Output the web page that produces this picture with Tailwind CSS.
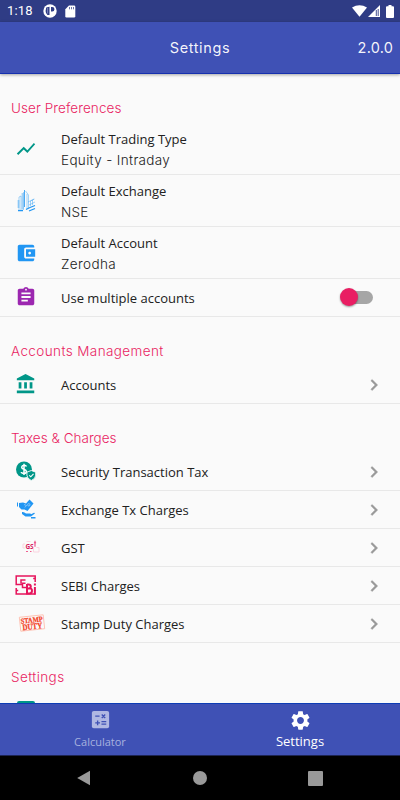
<!DOCTYPE html>
<html lang="en">
<head>
<meta charset="utf-8">
<title>Settings</title>
<script src="https://cdn.jsdelivr.net/npm/@tailwindcss/browser@4"></script>
</head>
<body class="w-[400px] h-[800px] overflow-hidden bg-[#fafafa] text-[#212121] font-['Open_Sans',sans-serif] text-[13px] whitespace-nowrap">
<div class="flex flex-col h-[800px]">
  <div class="flex items-center h-[22px] shrink-0 bg-[#2f3c85] text-white pl-[7px] pr-[6px]">
    <span class="font-[Roboto] text-[13px] tracking-[0.2px] w-[36px]">1:18</span>
    <svg class="w-[14px] h-[14px]" viewBox="0 0 14 14"><circle cx="7" cy="7" r="6.7" fill="#fff"/><path d="M3.200 3.500L6.500 2.800v8.200H4.500A5 5 0 0 1 2.600 7zM8 3h1.200a2 2 0 0 1 0 4.500H8z" fill="#2f3c85"/><path d="M4.600 4v5.500" stroke="#8e96c4" stroke-width=".8"/></svg>
    <svg class="ml-[8px] w-[11px] h-[13px]" viewBox="0 0 11 13"><path d="M4 .5h5q1.300 0 1.300 1.200v9.500q0 1.300-1.300 1.300H1.500Q.3 12.500.3 11.200V4.200z" fill="#fff"/><path d="M4.500 2v2.300M6.500 2v2.300M8.500 2v2.300" stroke="#2f3c85" stroke-opacity=".7"/></svg>
    <svg class="ml-auto w-[15px] h-[12px]" viewBox="0 0 15 12"><path d="M0 2.600Q7.500-1.900 15 2.600L7.500 11.800z" fill="#fff"/></svg>
    <svg class="ml-px w-[12px] h-[12px]" viewBox="0 0 12 12"><path d="M0 12L12 0v12z" fill="#fff"/><path d="M8.300 5v6M10.200 4v7" stroke="#2f3c85" stroke-width=".9"/></svg>
    <svg class="ml-[6px] w-[8px] h-[13px]" viewBox="0 0 8 13"><path d="M2.500 0h3v1.200H7q1 0 1 1V12q0 1-1 1H1q-1 0-1-1V2.200q0-1 1-1h1.500z" fill="#fff"/></svg>
  </div>
  <header class="relative z-10 grid grid-cols-3 items-center h-[52px] shrink-0 bg-[#3f51b5] border-b border-[#1530ae] shadow-[0_1px_3px_rgba(0,0,0,0.35)] text-white/95 font-[Inter] text-[14.500px] pr-[7px] pl-[7px]">
    <span></span>
    <h1 class="text-center tracking-[0.600px]">Settings</h1>
    <span class="text-right tracking-[0.200px]">2.0.0</span>
  </header>

  <main class="flex-1 overflow-hidden bg-[#fafafa] leading-[20px]">
    <h2 class="h-[49px] pt-[19px] pl-[11px] leading-[30px] text-[#e91e63] font-[Inter] font-light text-[13.500px] tracking-[0.080px]">User Preferences</h2>
    <div class="flex items-center h-[52px] border-b border-[#e8e8e8]">
      <div class="w-[61px] pl-[15px]"><svg class="size-[22px]" viewBox="0 0 24 24"><path fill="#009688" d="M3.500 18.490l6-6.010 4 4L22 6.920l-1.410-1.410-7.090 7.970-4-4L2 16.990z"/></svg></div>
      <div class="pt-[2px]"><p class="-mt-px">Default Trading Type</p><p class="mt-px font-[Inter] font-light tracking-[0.340px] text-[13.500px]">Equity - Intraday</p></div>
    </div>
    <div class="flex items-center h-[52px] border-b border-[#e8e8e8]">
      <div class="w-[61px] pl-[17px]"><svg class="w-[19px] h-[23px]" viewBox="0 0 19 23" fill="none" stroke="#2196f3"><path stroke-opacity=".4" d="M2 20V8l2-1v13M6.500 21V3M8.500 2l3 4v13M10 5v15M13.500 17v-5l4-2M15.500 11v5M11 13l6-3M12 16l6-3"/><path stroke-width="1.800" stroke-opacity=".4" d="M5.500 4v16M1.500 11v8"/><path d="M7.500 1v17" stroke-opacity=".8"/><path stroke-width="1.300" d="M9 20.500l4-2 5-2M12 22l6-2.500M1 21.500h5"/></svg></div>
      <div class="pt-[2px]"><p class="-mt-px">Default Exchange</p><p class="mt-px font-[Inter] font-light tracking-[0.200px] text-[13.500px]">NSE</p></div>
    </div>
    <div class="flex items-center h-[52px] border-b border-[#e8e8e8]">
      <div class="w-[61px] pl-[15px]"><svg class="size-[22px]" viewBox="0 0 24 24"><path fill="#2196f3" d="M21 18v1c0 1.100-.900 2-2 2H5c-1.110 0-2-.900-2-2V5c0-1.100.890-2 2-2h14c1.100 0 2 .900 2 2v1h-9c-1.110 0-2 .900-2 2v8c0 1.100.890 2 2 2h9zm-9-2h10V8H12v8zm4-2.500c-.830 0-1.500-.670-1.500-1.500s.670-1.500 1.500-1.500 1.500.670 1.500 1.500-.670 1.500-1.500 1.500z"/></svg></div>
      <div class="pt-[2px]"><p class="-mt-px">Default Account</p><p class="mt-px font-[Inter] font-light tracking-[0.400px] text-[13.500px]">Zerodha</p></div>
    </div>
    <div class="flex items-center h-[38px] border-b border-[#e8e8e8]">
      <div class="w-[61px] pl-[15px] pb-[2px]"><svg class="size-[22px]" viewBox="0 0 24 24"><path fill="#9c27b0" d="M19 3h-4.180C14.400 1.840 13.300 1 12 1c-1.300 0-2.400.840-2.820 2H5c-1.100 0-2 .900-2 2v14c0 1.100.900 2 2 2h14c1.100 0 2-.900 2-2V5c0-1.100-.900-2-2-2zm-7 0c.550 0 1 .450 1 1s-.450 1-1 1-1-.450-1-1 .450-1 1-1zm2 14H7v-2h7v2zm3-4H7v-2h10v2zm0-4H7V7h10v2z"/></svg></div>
      <p>Use multiple accounts</p>
      <div class="relative ml-auto mr-[27px] w-[31px] h-[13px] rounded-full bg-[#a6a6a6]"><span class="absolute -left-[2px] -top-[3px] size-[18px] rounded-full bg-[#e91e63] shadow-[0_1px_2px_rgba(0,0,0,0.4)]"></span></div>
    </div>

    <h2 class="h-[49px] pt-[19px] pl-[11px] leading-[30px] text-[#e91e63] font-[Inter] font-light text-[13.500px] tracking-[0.400px]">Accounts Management</h2>
    <div class="flex items-center h-[38px] border-b border-[#e8e8e8]">
      <div class="w-[61px] pl-[15px] pb-[2px]"><svg class="size-[22px]" viewBox="0 0 24 24"><path fill="#009688" d="M4 10v7h3v-7H4zm6 0v7h3v-7h-3zM2 22h19v-3H2v3zm14-12v7h3v-7h-3zm-4.500-9L2 6v2h19V6l-9.500-5z"/></svg></div>
      <p>Accounts</p>
      <svg class="ml-auto mr-[15px] size-[22px]" viewBox="0 0 24 24"><path fill="#999" stroke="#999" stroke-width=".5" d="M10 6L8.590 7.410 13.170 12l-4.580 4.590L10 18l6-6z"/></svg>
    </div>

    <h2 class="h-[49px] pt-[19px] pl-[11px] leading-[30px] text-[#e91e63] font-[Inter] font-light text-[13.500px]">Taxes &amp; Charges</h2>
    <div class="flex items-center h-[38px] border-b border-[#e8e8e8]">
      <div class="w-[61px] pl-[15px] pb-[2px]"><svg class="w-[22px] h-[20px]" viewBox="0 0 22 20"><circle cx="9" cy="8.500" r="8" fill="#009688"/><path d="M11.500 5.500Q11 4.300 9 4.300T6.700 6.200Q6.700 7.600 9 8.300T11.500 10.600Q11.500 12.400 9 12.400T6.300 11M9 2.700V14" fill="none" stroke="#fff" stroke-width="1.500"/><path d="M16.300 9.500l4.400 1.700v3q0 3.500-4.400 5.300-4.400-1.800-4.400-5.300v-3z" fill="#009688" stroke="#fafafa" stroke-width=".9"/><path d="M14.300 14.300l1.500 1.500 2.700-3" fill="none" stroke="#fff" stroke-width="1.100"/></svg></div>
      <p>Security Transaction Tax</p>
      <svg class="ml-auto mr-[15px] size-[22px]" viewBox="0 0 24 24"><path fill="#999" stroke="#999" stroke-width=".5" d="M10 6L8.590 7.410 13.170 12l-4.580 4.590L10 18l6-6z"/></svg>
    </div>
    <div class="flex items-center h-[38px] border-b border-[#e8e8e8]">
      <div class="w-[61px] pl-[17px] pb-[2px]"><svg class="w-[19px] h-[20px]" viewBox="0 0 19 20"><g fill="#2196f3"><path d="M0 3.500h1v4H0zM2 4l4-.500 3 1 3.500-4 4 4-6 7.500-3-1.500H4.500L2 8z"/><path d="M5 13q2-.5 4 1.500h4q1 0 1 .800l3-1.500q1.300 0 .600 1L14 17.500H8.500L5 15zM14 18h4.500v1.500H14z"/></g><path d="M7 5.500l2.500 1-1.700 2" stroke="#fff" stroke-opacity=".7" stroke-width=".6" fill="none"/><circle cx="11.800" cy="5.800" r="1.200" stroke="#fff" stroke-opacity=".8" stroke-width=".5" fill="none"/></svg></div>
      <p>Exchange Tx Charges</p>
      <svg class="ml-auto mr-[15px] size-[22px]" viewBox="0 0 24 24"><path fill="#999" stroke="#999" stroke-width=".5" d="M10 6L8.590 7.410 13.170 12l-4.580 4.590L10 18l6-6z"/></svg>
    </div>
    <div class="flex items-center h-[38px] border-b border-[#e8e8e8]">
      <div class="w-[61px] pl-[22px] pb-[3px]"><svg class="w-[18px] h-[13px]" viewBox="0 0 18 13"><text x="3.500" y="9.300" font-family="Open Sans, sans-serif" font-weight="700" font-size="6.500" fill="#d81b60" textLength="8">GS</text><path d="M13 .8v6M11.900 2.800h2.200" stroke="#e91e63" stroke-opacity=".8" stroke-width="1.100"/><path d="M3 4H1v4h2M11.500 7.500v4.500H17V7.500h-2.500M4.500 1.500h4" fill="none" stroke="#fbd0de" stroke-width=".9"/><path d="M4 11.500h2M8 11.500h1.500" stroke="#e91e63" stroke-opacity=".7"/></svg></div>
      <p>GST</p>
      <svg class="ml-auto mr-[15px] size-[22px]" viewBox="0 0 24 24"><path fill="#999" stroke="#999" stroke-width=".5" d="M10 6L8.590 7.410 13.170 12l-4.580 4.590L10 18l6-6z"/></svg>
    </div>
    <div class="flex items-center h-[38px] border-b border-[#e8e8e8]">
      <div class="w-[61px] pl-[15px] pb-[2px]"><svg class="w-[22px] h-[20px]" viewBox="0 0 22 20" fill="none" stroke="#e6145c" stroke-width="1.500"><path d="M20.200 7V1H1.200v8.500H7M20.200 3.500h-2M10.500 5H6v3.500M10.500 8.300H7.500v4.200H11M1.200 13v6h19.500M1.200 15.500h2"/><path stroke-width="2" d="M12 9v9.500h2.500q2.500 0 2.500-2.700T14.500 13.500H12M12 9.500h1.500q2.300 0 2.300 2t-2.300 2M19.900 12v7.500M19.900 8.500v2"/></svg></div>
      <p>SEBI Charges</p>
      <svg class="ml-auto mr-[15px] size-[22px]" viewBox="0 0 24 24"><path fill="#999" stroke="#999" stroke-width=".5" d="M10 6L8.590 7.410 13.170 12l-4.580 4.590L10 18l6-6z"/></svg>
    </div>
    <div class="flex items-center h-[38px] border-b border-[#e8e8e8]">
      <div class="w-[61px] pl-[19px] pb-[2px]"><svg class="w-[26px] h-[18px] overflow-visible" viewBox="0 0 26 18"><g transform="rotate(-6 13 9)" font-family="Liberation Serif, serif" font-weight="700" fill="#f4411e" stroke="#f4411e" stroke-width=".25"><rect x="1" y="2" width="24" height="14" fill="none" stroke="#ffb8a8" stroke-width=".8"/><text x="2" y="8.600" font-size="7.500" textLength="22" lengthAdjust="spacingAndGlyphs">STAMP</text><text x="3" y="15.200" font-size="8.500" textLength="20" lengthAdjust="spacingAndGlyphs">DUTY</text></g></svg></div>
      <p>Stamp Duty Charges</p>
      <svg class="ml-auto mr-[15px] size-[22px]" viewBox="0 0 24 24"><path fill="#999" stroke="#999" stroke-width=".5" d="M10 6L8.590 7.410 13.170 12l-4.580 4.590L10 18l6-6z"/></svg>
    </div>

    <h2 class="h-[49px] pt-[19px] pl-[11px] leading-[30px] text-[#e91e63] font-[Inter] font-light text-[13.500px] tracking-[0.400px]">Settings</h2>
    <div class="pl-[17px] pt-[9px]"><div class="w-[18px] h-[18px] rounded-[2px] bg-[#009688]"></div></div>
  </main>

  <nav class="grid grid-cols-2 h-[52px] shrink-0 bg-[#3f51b5] border-t border-[#0d3cb5] text-center">
    <div class="flex flex-col items-center pt-[4px] text-[#a8b1df]">
      <svg class="size-[23px]" viewBox="0 0 24 24"><rect x="3" y="3" width="18" height="18" rx="2" fill="#b0b8e2"/><path d="M6.500 8.500h4.500M13.300 6.800l3.600 3.600M16.900 6.800l-3.600 3.600M6.500 15.500h5M9 13v5M13 14.200h5M13 16.800h5" stroke="#3f51b5" stroke-width="1.400"/></svg>
      <span class="mt-[2px] text-[11px] leading-[18px]">Calculator</span>
    </div>
    <div class="flex flex-col items-center pt-[5px] text-white">
      <svg class="size-[23px]" viewBox="0 0 24 24"><path fill="#fff" d="M19.140 12.940c.040-.300.060-.610.060-.940 0-.320-.020-.640-.070-.940l2.030-1.580c.180-.140.230-.410.120-.610l-1.920-3.320c-.120-.220-.370-.290-.590-.220l-2.390.960c-.500-.380-1.030-.700-1.620-.940l-.360-2.540c-.040-.240-.240-.410-.480-.410h-3.840c-.240 0-.430.170-.470.410l-.360 2.540c-.590.240-1.130.570-1.620.940l-2.390-.960c-.220-.080-.470 0-.590.220L2.740 8.870c-.120.210-.080.470.120.610l2.030 1.580c-.050.300-.090.630-.090.940s.020.640.070.940l-2.030 1.580c-.180.140-.230.410-.120.610l1.920 3.320c.120.220.370.290.590.220l2.390-.960c.500.380 1.030.700 1.620.940l.360 2.540c.050.240.240.410.480.410h3.840c.240 0 .440-.170.470-.410l.360-2.540c.590-.240 1.130-.560 1.620-.940l2.390.960c.220.080.470 0 .590-.220l1.920-3.320c.120-.220.070-.470-.120-.610l-2.010-1.580zM12 15.600c-1.980 0-3.600-1.620-3.600-3.600s1.620-3.600 3.600-3.600 3.600 1.620 3.600 3.600-1.620 3.600-3.600 3.600z"/></svg>
      <span class="text-[13px] leading-[18px]">Settings</span>
    </div>
  </nav>
  <div class="flex items-center justify-between h-[45px] shrink-0 bg-black pl-[77px] pr-[77px] border-t border-[#1c2452]">
    <svg class="w-[14px] h-[16px]" viewBox="0 0 14 16"><path d="M.2 8L13 .8v14.400z" fill="#999"/></svg>
    <div class="size-[14px] rounded-full bg-[#999]"></div>
    <div class="size-[15px] rounded-[1px] bg-[#999]"></div>
  </div>
</div>
</body>
</html>
